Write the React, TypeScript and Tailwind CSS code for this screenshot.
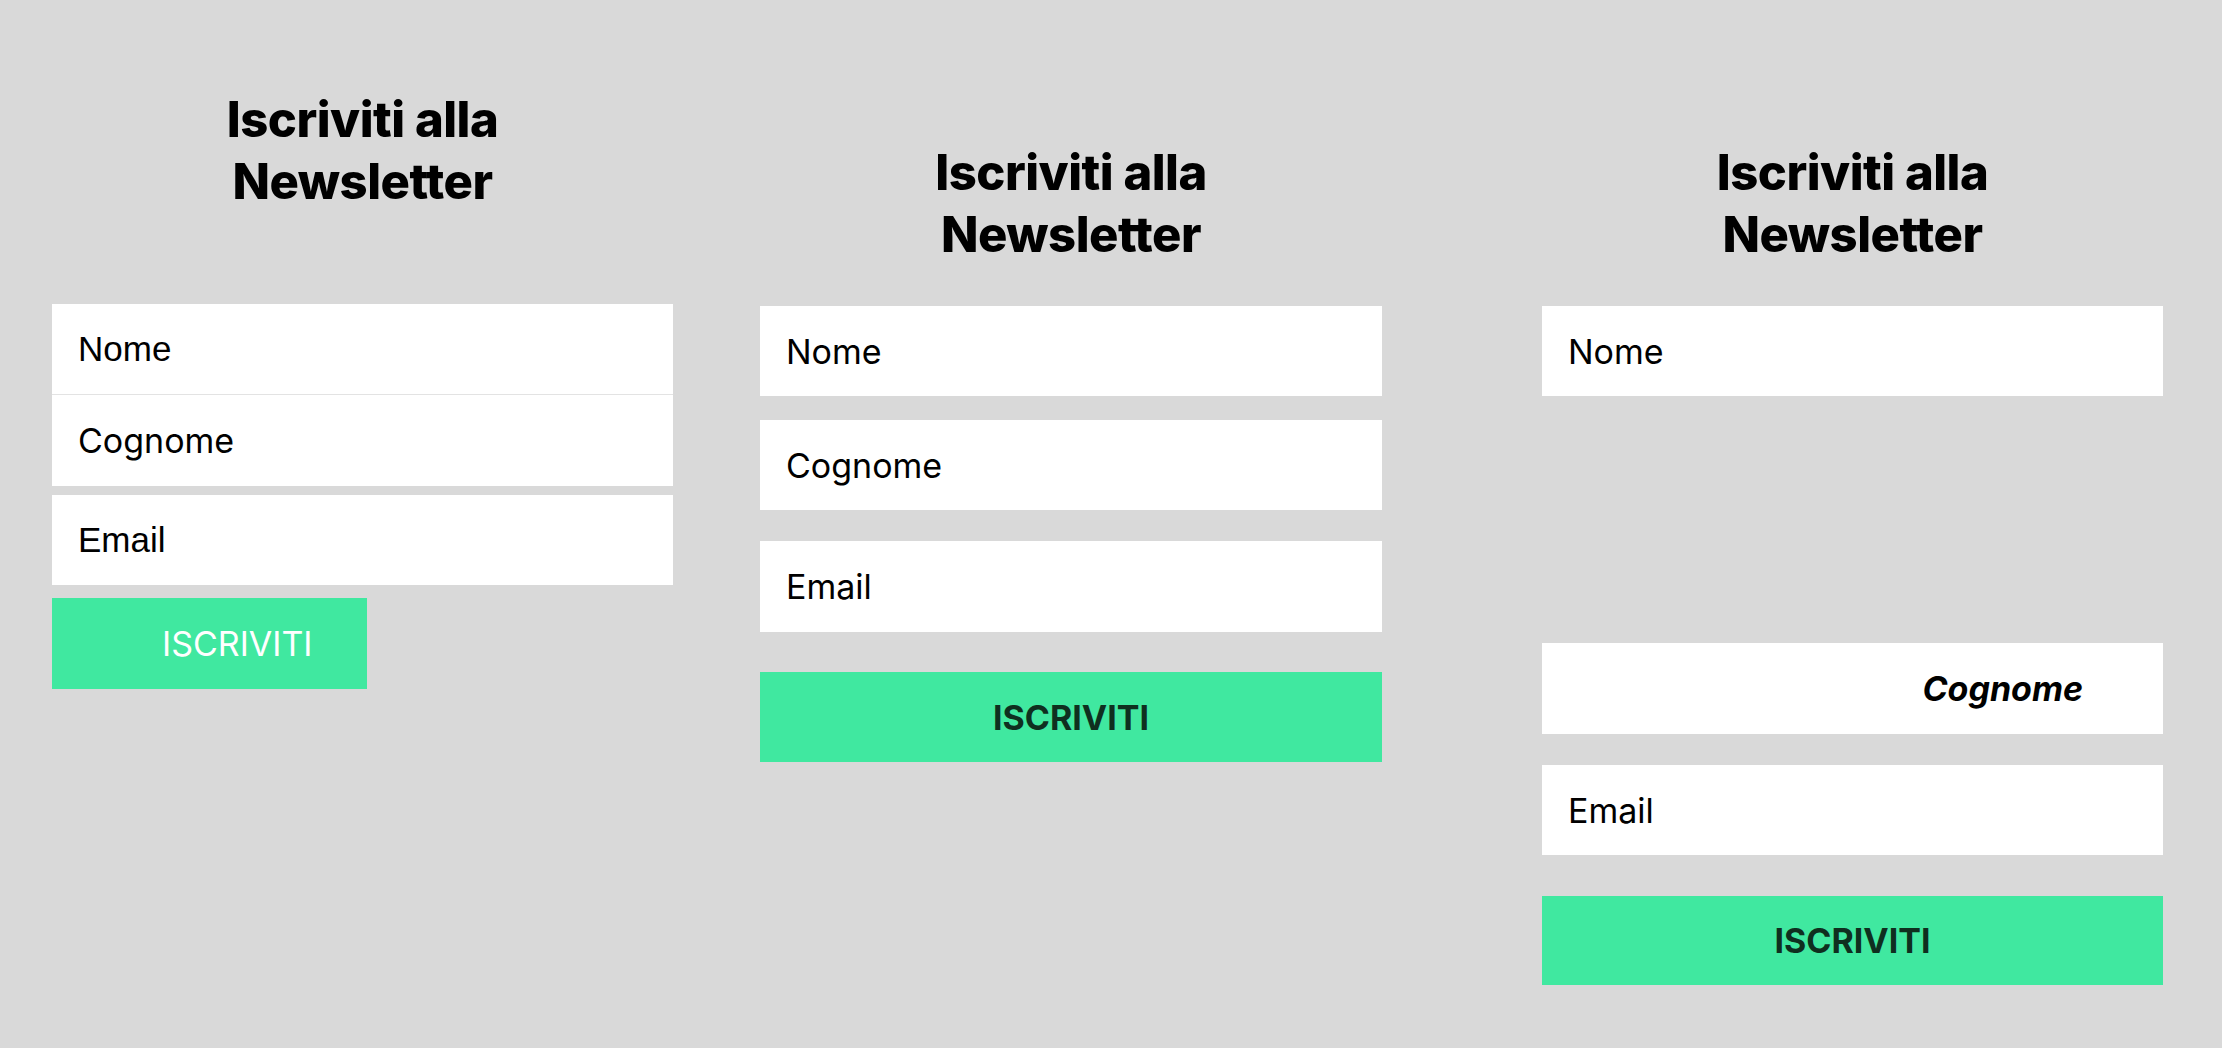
import React from 'react';

const title = 'Iscriviti alla';

const Heading: React.FC = () => (
  <h2 className="text-center font-['Inter',sans-serif] text-[49px] leading-[62px] font-extrabold tracking-[-0.5px] text-black [font-feature-settings:'liga'_0,'calt'_0,'dlig'_0]">
    {title}
    <br />
    Newsletter
  </h2>
);

export default function App() {
  return (
    <div className="min-h-screen w-full bg-[#d9d9d9] flex items-start pl-[52px] font-['Inter',sans-serif]">
      {/* Colonna 1: campi attaccati */}
      <div className="w-[621px] flex flex-col pt-[89px]">
        <Heading />
        <form className="mt-[91px] flex flex-col" onSubmit={(e) => e.preventDefault()}>
          <input
            placeholder="Nome"
            className="h-[91px] bg-white pl-[26px] font-['Liberation_Sans',Arial,sans-serif] text-[35px] text-black placeholder:text-black outline-none border-b border-[#e3e3e3]"
          />
          <input
            placeholder="Cognome"
            className="h-[91px] bg-white pl-[26px] font-['Inter',sans-serif] text-[34px] text-black placeholder:text-black outline-none"
          />
          <input
            placeholder="Email"
            className="mt-[9px] h-[90px] bg-white pl-[26px] font-['Liberation_Sans',Arial,sans-serif] text-[35px] text-black placeholder:text-black outline-none"
          />
          <button
            type="submit"
            className="mt-[13px] h-[91px] w-[315px] bg-[#40e8a0] pl-[110px] text-left text-[34px] font-normal text-white"
          >
            ISCRIVITI
          </button>
        </form>
      </div>

      {/* Colonna 2: campi spaziati */}
      <div className="ml-[87px] w-[622px] flex flex-col pt-[142px]">
        <Heading />
        <form className="mt-[40px] flex flex-col" onSubmit={(e) => e.preventDefault()}>
          <input
            placeholder="Nome"
            className="h-[90px] bg-white pl-[26px] text-[34px] text-black placeholder:text-black outline-none"
          />
          <input
            placeholder="Cognome"
            className="mt-[24px] h-[90px] bg-white pl-[26px] text-[34px] text-black placeholder:text-black outline-none"
          />
          <input
            placeholder="Email"
            className="mt-[31px] h-[91px] bg-white pl-[26px] text-[34px] text-black placeholder:text-black outline-none"
          />
          <button
            type="submit"
            className="mt-[40px] h-[90px] w-full bg-[#40e8a0] text-center text-[34px] font-bold text-[#0f2f1f]"
          >
            ISCRIVITI
          </button>
        </form>
      </div>

      {/* Colonna 3: cognome spostato e in corsivo */}
      <div className="ml-[160px] w-[621px] flex flex-col pt-[142px]">
        <Heading />
        <form className="mt-[40px] flex flex-col" onSubmit={(e) => e.preventDefault()}>
          <input
            placeholder="Nome"
            className="h-[90px] bg-white pl-[26px] text-[34px] text-black placeholder:text-black outline-none"
          />
          <input
            placeholder="Cognome"
            className="mt-[247px] h-[91px] bg-white pr-[80px] text-right text-[34px] font-bold italic text-black placeholder:text-black outline-none"
          />
          <input
            placeholder="Email"
            className="mt-[31px] h-[90px] bg-white pl-[26px] text-[34px] text-black placeholder:text-black outline-none"
          />
          <button
            type="submit"
            className="mt-[41px] h-[89px] w-full bg-[#40e8a0] text-center text-[34px] font-bold text-[#0f2f1f]"
          >
            ISCRIVITI
          </button>
        </form>
      </div>
    </div>
  );
}
